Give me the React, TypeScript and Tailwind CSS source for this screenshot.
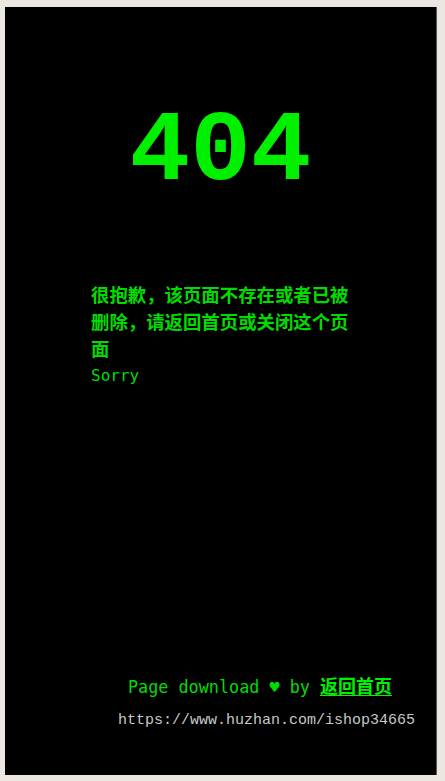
export default function App() {
  return (
    <div className="min-h-[781px] w-[445px] bg-[#ece7e1] pt-[7px] pl-[5px] pr-[8px] pb-[6px]">
      <div className="flex h-[768px] flex-col bg-black border-r border-[#5a5a5a]">
        <h1 className="mt-[92px] text-center font-['Liberation_Mono',monospace] text-[101px] font-bold leading-[106px] text-[#00f000]">
          404
        </h1>

        <div className="ml-[86px] mt-[76px] w-[264px]">
          <p className="font-['Noto_Sans_CJK_SC',sans-serif] text-[18.4px] font-bold leading-[27px] text-[#00dc00]">
            很抱歉，该页面不存在或者已被删除，请返回首页或关闭这个页面
          </p>
          <p className="mt-[4px] font-['DejaVu_Sans_Mono',monospace] text-[16px] leading-[20px] text-[#00dc00]">
            Sorry
          </p>
        </div>

        <div className="mt-auto mb-[44px]">
          <p className="pl-[123px] font-['DejaVu_Sans_Mono','Noto_Sans_CJK_SC',monospace] text-[16.8px] leading-[24px] text-[#00dc00]">
            Page download ♥ by{" "}
            <a
              href="#"
              className="font-['Noto_Sans_CJK_SC',sans-serif] text-[18px] font-bold text-[#00f000] underline underline-offset-2"
            >
              返回首页
            </a>
          </p>
          <p className="mt-[12px] pl-[113px] font-['Liberation_Mono',monospace] text-[15px] leading-[20px] text-[#c8c8c8]">
            https://www.huzhan.com/ishop34665
          </p>
        </div>
      </div>
    </div>
  );
}
